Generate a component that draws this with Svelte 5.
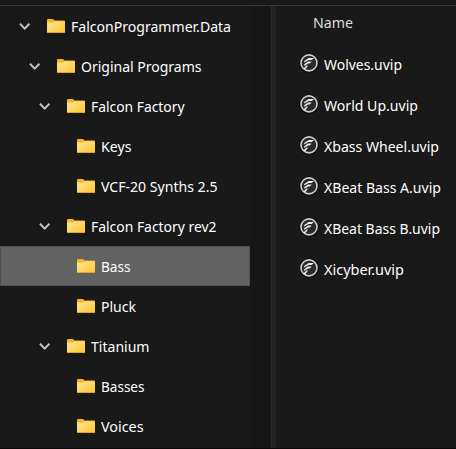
<script>
  // width: advance of each label in pixels
  const folders = [
    { name: 'FalconProgrammer.Data', level: 0, open: true, width: 160 },
    { name: 'Original Programs', level: 1, open: true, width: 120.5 },
    { name: 'Falcon Factory', level: 2, open: true, width: 93.5 },
    { name: 'Keys', level: 3, width: 30.5 },
    { name: 'VCF-20 Synths 2.5', level: 3, width: 116.5 },
    { name: 'Falcon Factory rev2', level: 2, open: true, width: 125.5 },
    { name: 'Bass', level: 3, selected: true, width: 29.5 },
    { name: 'Pluck', level: 3, width: 35 },
    { name: 'Titanium', level: 2, open: true, width: 58.5 },
    { name: 'Basses', level: 3, width: 43.5 },
    { name: 'Voices', level: 3, width: 42.5 }
  ];
  const files = [
    { name: 'Wolves.uvip', width: 78 },
    { name: 'World Up.uvip', width: 94 },
    { name: 'Xbass Wheel.uvip', width: 115 },
    { name: 'XBeat Bass A.uvip', width: 117 },
    { name: 'XBeat Bass B.uvip', width: 116 },
    { name: 'Xicyber.uvip', width: 80 }
  ];

  // Condenses a label so that it takes up its given width
  function fit(node, width) {
    const natural = node.getBoundingClientRect().width;
    node.style.transform = `scaleX(${width / natural})`;
  }
</script>

<div class="window">
  <nav class="tree">
    {#each folders as f}
      <div class="row" class:selected={f.selected} style:padding-left="{18 + f.level * 10}px">
        <span class="toggle">
          {#if f.open}
            <svg width="14" height="10" viewBox="0 0 14 10"><path d="M2 2.8 6.7 7.6l4.7-4.8" fill="none" stroke="#c4c4c4" stroke-width="2" /></svg>
          {/if}
        </span>
        <svg class="folder" width="18" height="14" viewBox="0 0 18 14">
          <path d="M0 1Q0 0 1 0H6L7.6 1.4H17Q18 1.4 18 2.4V12H0Z" fill="#f8b21c" />
          <path d="M0 3.6H5.8L7.6 2.2H17Q18 2.2 18 3V13Q18 14 17 14H1Q0 14 0 13Z" fill="url(#folder-face)" />
          <path d="M0 13H18Q18 14 17 14H1Q0 14 0 13Z" fill="#e6a324" />
        </svg>
        <span class="label" use:fit={f.width}>{f.name}</span>
      </div>
    {/each}
  </nav>
  <div class="gutter"></div>
  <main class="files">
    <div class="header"><span class="label" use:fit={40}>Name</span></div>
    {#each files as f}
      <div class="file">
        <svg width="20" height="20" viewBox="0 0 20 20">
          <circle cx="10" cy="10.2" r="9.8" fill="#0c0c0c" />
          <circle cx="10" cy="9.9" r="8" fill="#2a2a2a" stroke="#cfcfcf" stroke-width="1.6" />
          <path d="M5.2 9.4V7.9L9.6 5H15L12.6 7H9.6Z" fill="#ececec" />
          <path d="M5.2 13V11.2L9 8.6H12.8L10.6 10.5H9Z" fill="#ececec" />
          <path d="M4.4 15.6 8.4 11.8V13.6L6 16.6Z" fill="#ececec" />
        </svg>
        <span class="label" use:fit={f.width}>{f.name}</span>
      </div>
    {/each}
  </main>
  <svg class="defs" width="0" height="0">
    <defs>
      <linearGradient id="folder-face" x1="0" y1="0" x2="1" y2="1">
        <stop offset="0" stop-color="#ffe79c" />
        <stop offset="1" stop-color="#ffc52f" />
      </linearGradient>
    </defs>
  </svg>
</div>

<style>
  :global(body) { background: #191919; overflow: hidden; }
  .window {
    box-sizing: border-box;
    position: relative;
    display: flex;
    width: 456px;
    height: 449px;
    padding-top: 5px;
    background: linear-gradient(#3a3a3a, #3a3a3a) 0 5px / 100% 1px no-repeat, #191919;
    border-bottom: 1px solid #0c080a;
    color: #fff;
    font: 15px/20px "Noto Sans", "Open Sans", sans-serif;
    white-space: nowrap;
  }
  .tree { width: 250px; padding-top: 1px; flex: none; }
  .row { box-sizing: border-box; display: flex; align-items: center; height: 40px; }
  .selected { background: #626262; box-shadow: inset 0 0 0 1px #505050; }
  .toggle { width: 29px; height: 10px; display: flex; flex: none; }
  .folder { flex: none; margin-right: 6px; }
  .label { display: inline-block; flex: none; transform-origin: 0 50%; }
  .gutter {
    box-sizing: border-box;
    width: 26px;
    flex: none;
    margin-top: 1px;
    background: #171717;
    border-right: 4px solid #222;
    box-shadow: inset -1px 0 #2a2a2a;
  }
  .files { flex: 1; padding-top: 3px; }
  .header { height: 35px; padding: 4px 0 0 37px; box-sizing: border-box; color: #dedede; }
  .file { height: 41px; display: flex; align-items: center; padding-left: 23px; }
  .file svg { flex: none; margin: 0 5px 2px 0; }
  .defs { position: absolute; }
</style>
